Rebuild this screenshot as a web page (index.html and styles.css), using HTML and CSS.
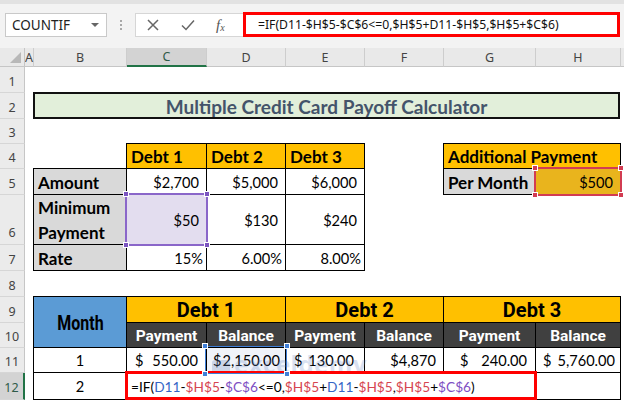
FILE: index.html
```html
<!DOCTYPE html>
<html lang="en">
<head>
<meta charset="utf-8">
<title>Multiple Credit Card Payoff Calculator</title>
<link rel="stylesheet" href="styles.css">
</head>
<body>
<div class="app">
  <div class="fbar">
    <div class="namebox"><span>COUNTIF</span><span class="caret"></span></div>
    <div class="dots"><i></i><i></i><i></i></div>
    <div class="fxbox">
      <svg class="ico" width="14" height="14" viewBox="0 0 14 14"><path d="M2 2 L12 12 M12 2 L2 12" stroke="#666" stroke-width="1.5" fill="none"/></svg>
      <svg class="ico" width="16" height="14" viewBox="0 0 16 14"><path d="M2 7.5 L6 11.5 L14 2.5" stroke="#666" stroke-width="1.5" fill="none"/></svg>
      <span class="fx">f<sub>x</sub></span>
    </div>
    <div class="finput">=IF(D11-$H$5-$C$6&lt;=0,$H$5+D11-$H$5,$H$5+$C$6)</div>
  </div>

  <div class="sheet">
    <div class="corner"><span class="tri"></span></div>
    <div class="colh cA">A</div>
    <div class="colh cB">B</div>
    <div class="colh cC selc">C</div>
    <div class="colh cD">D</div>
    <div class="colh cE">E</div>
    <div class="colh cF">F</div>
    <div class="colh cG">G</div>
    <div class="colh cH">H</div>
    <div class="colh cX"></div>

    <div class="rowh r1">1</div>
    <div class="rowh r2">2</div>
    <div class="rowh r3">3</div>
    <div class="rowh r4">4</div>
    <div class="rowh r5">5</div>
    <div class="rowh r6">6</div>
    <div class="rowh r7">7</div>
    <div class="rowh r8">8</div>
    <div class="rowh r9">9</div>
    <div class="rowh r10">10</div>
    <div class="rowh r11">11</div>
    <div class="rowh r12 selr">12</div>

    <div class="title r2 sB-H">Multiple Credit Card Payoff Calculator</div>

    <div class="cell yel r4 cC">Debt 1</div>
    <div class="cell yel r4 cD">Debt 2</div>
    <div class="cell yel r4 cE">Debt 3</div>
    <div class="cell yel r4 sG-H">Additional Payment</div>

    <div class="cell lbl r5 cB">Amount</div>
    <div class="cell num r5 cC">$2,700</div>
    <div class="cell num r5 cD">$5,000</div>
    <div class="cell num r5 cE">$6,000</div>
    <div class="cell lbl r5 cG">Per Month</div>
    <div class="cell num yel-sel r5 cH">$500
      <span class="sel sel-red"><i class="h tl"></i><i class="h tr"></i><i class="h bl"></i><i class="h br"></i></span>
    </div>

    <div class="cell lbl wrap r6 cB"><span>Minimum</span><span>Payment</span></div>
    <div class="cell num lav r6 cC">$50
      <span class="sel sel-purple"><i class="h tl"></i><i class="h tr"></i><i class="h bl"></i><i class="h br"></i></span>
    </div>
    <div class="cell num r6 cD">$130</div>
    <div class="cell num r6 cE">$240</div>

    <div class="cell lbl r7 cB">Rate</div>
    <div class="cell num pct r7 cC">15%</div>
    <div class="cell num pct r7 cD">6.00%</div>
    <div class="cell num pct r7 cE">8.00%</div>

    <div class="cell blue cond month center r9-10 cB"><span>Month</span></div>
    <div class="cell yel cond big center r9 sC-D"><span>Debt 1</span></div>
    <div class="cell yel cond big center r9 sE-F"><span>Debt 2</span></div>
    <div class="cell yel cond big center r9 sG-H"><span>Debt 3</span></div>

    <div class="cell dark cond center r10 cC"><span>Payment</span></div>
    <div class="cell dark cond center r10 cD"><span>Balance</span></div>
    <div class="cell dark cond center r10 cE"><span>Payment</span></div>
    <div class="cell dark cond center r10 cF"><span>Balance</span></div>
    <div class="cell dark cond center r10 cG"><span>Payment</span></div>
    <div class="cell dark cond center r10 cH"><span>Balance</span></div>

    <div class="cell center r11 cB">1</div>
    <div class="cell acc r11 cC"><span>$</span><span>550.00</span></div>
    <div class="cell acc tint r11 cD"><span>$</span><span>2,150.00</span>
      <span class="sel sel-blue"><i class="h tl"></i><i class="h tr"></i><i class="h bl"></i><i class="h br"></i></span>
    </div>
    <div class="cell acc r11 cE"><span>$</span><span>130.00</span></div>
    <div class="cell num r11 cF">$4,870</div>
    <div class="cell acc wide r11 cG"><span>$</span><span>240.00</span></div>
    <div class="cell acc last r11 cH"><span>$</span><span>5,760.00</span></div>

    <div class="cell center r12 cB">2</div>
    <div class="formula r12 sC-G">=IF(<b class="fb">D11</b>-<b class="fr">$H$5</b>-<b class="fp">$C$6</b>&lt;=0,<b class="fr">$H$5</b>+<b class="fb">D11</b>-<b class="fr">$H$5</b>,<b class="fr">$H$5</b>+<b class="fp">$C$6</b>)</div>
    <div class="cell r12 cH"></div>

    <div class="watermark"><span class="wm-logo"></span><span class="wm-text">exceldemy<small>EXCEL · DATA · BI</small></span></div>
  </div>
</div>
</body>
</html>
```

FILE: styles.css
```css
* { box-sizing: border-box; }

body {
  margin: 0;
  background: #fff;
  font-family: Lato, "Liberation Sans", sans-serif;
  color: #000;
}

.app {
  position: relative;
  width: 624px;
  height: 400px;
  overflow: hidden;
}

/* ---------- formula bar ---------- */
.fbar {
  height: 48px;
  display: flex;
  align-items: flex-start;
  padding: 13px 0 0 5px;
  background: linear-gradient(#e2e2e2 0 4px, #f3f3f3 4px);
}

.namebox {
  width: 102px;
  height: 24px;
  background: #fff;
  border: 1px solid #c9c9c9;
  display: flex;
  align-items: center;
  justify-content: space-between;
  padding: 0 7px 0 6px;
  font: 13.5px "Noto Sans", sans-serif;
  color: #222;
}

.caret {
  width: 0;
  height: 0;
  border-left: 4px solid transparent;
  border-right: 4px solid transparent;
  border-top: 4px solid #666;
}

.dots {
  width: 28px;
  height: 24px;
  display: flex;
  flex-direction: column;
  align-items: center;
  justify-content: center;
  gap: 2px;
}

.dots i {
  width: 2px;
  height: 2px;
  background: #a8a8a8;
}

.fxbox {
  width: 108px;
  height: 24px;
  background: #fff;
  border: 1px solid #d6d6d6;
  border-right: none;
  display: flex;
  align-items: center;
  gap: 20px;
  padding-left: 10px;
}

.fx {
  font: italic 15px "Liberation Serif", serif;
  color: #555;
}

.fx sub {
  font-size: 10px;
  vertical-align: -1px;
}

.finput {
  width: 377px;
  height: 25px;
  margin-top: -1px;
  border: 3px solid #ff0000;
  background: #fff;
  padding-left: 12px;
  font: 12.2px "Noto Sans", sans-serif;
  line-height: 19px;
  white-space: nowrap;
  color: #111;
}

/* ---------- sheet grid ---------- */
.sheet {
  position: relative;
  display: grid;
  grid-template-columns: 25px 9px 93px 80px 79px 79px 79px 92px 85px 3px;
  grid-template-rows: 19px 26px 26px 25px 25px 26px 50px 26px 26px 26px 25px 25px 27px;
}

.corner {
  grid-column: 1;
  grid-row: 1;
  background: #e9e9e9;
  border-right: 1px solid #c6c6c6;
  border-bottom: 1px solid #c6c6c6;
  position: relative;
}

.tri {
  position: absolute;
  right: 3px;
  bottom: 3px;
  width: 0;
  height: 0;
  border-left: 11px solid transparent;
  border-bottom: 11px solid #b8b8b8;
}

.colh {
  grid-row: 1;
  background: #e9e9e9;
  border-right: 1px solid #cdcdcd;
  border-bottom: 1px solid #c6c6c6;
  display: flex;
  align-items: center;
  justify-content: center;
  font: 12.5px "Noto Sans", sans-serif;
  color: #444;
}

.colh.cX { border-right: none; }

.colh.selc {
  background: #d3d3d3;
  border-bottom: 2px solid #217346;
  color: #2e5a48;
}

.rowh {
  grid-column: 1;
  background: #ebebeb;
  border-right: 1px solid #c6c6c6;
  border-bottom: 1px solid #d6d6d6;
  display: flex;
  align-items: center;
  justify-content: center;
  padding-top: 3px;
  font: 12.5px "Noto Sans", sans-serif;
  color: #444;
}

.rowh.r6 { align-items: flex-end; padding-bottom: 3px; }

.rowh.selr {
  background: #d3d3d3;
  border-right: 2px solid #217346;
  color: #2e5a48;
}

/* row placement */
.r1 { grid-row: 2; }
.r2 { grid-row: 3; }
.r3 { grid-row: 4; }
.r4 { grid-row: 5; }
.r5 { grid-row: 6; }
.r6 { grid-row: 7; }
.r7 { grid-row: 8; }
.r8 { grid-row: 9; }
.r9 { grid-row: 10; }
.r10 { grid-row: 11; }
.r11 { grid-row: 12; }
.r12 { grid-row: 13; }
.r9-10 { grid-row: 10 / 12; }

/* column placement */
.cA { grid-column: 2; }
.cB { grid-column: 3; }
.cC { grid-column: 4; }
.cD { grid-column: 5; }
.cE { grid-column: 6; }
.cF { grid-column: 7; }
.cG { grid-column: 8; }
.cH { grid-column: 9; }
.cX { grid-column: 10; }
.sB-H { grid-column: 3 / 10; }
.sC-D { grid-column: 4 / 6; }
.sE-F { grid-column: 6 / 8; }
.sG-H { grid-column: 8 / 10; }
.sC-G { grid-column: 4 / 9; }

/* ---------- cells ---------- */
.title {
  margin: -1px 1px 0 -1px;
  border: 2px solid #111;
  background: #e2efda;
  color: #44546a;
  font-weight: 700;
  font-size: 19px;
  display: flex;
  align-items: center;
  justify-content: center;
  padding-top: 1px;
}

.cell {
  position: relative;
  margin: -1px 0 0 -1px;
  border: 1px solid #000;
  display: flex;
  align-items: center;
  padding: 1px 4px 0;
  font-size: 14.6px;
  white-space: nowrap;
}

.yel { background: #ffc000; font-weight: 700; font-size: 17px; }
.lbl { background: #d9d9d9; font-weight: 700; font-size: 17px; }
.num { justify-content: flex-end; padding-right: 7px; }
.pct { padding-right: 3px; }
.center { justify-content: center; }
.lav { background: #e3ddef; }
.tint { background: #f0f3f9; }
.yel-sel { background: #e9b41d; }

.wrap {
  flex-direction: column;
  align-items: flex-start;
  justify-content: space-between;
  padding: 2px 4px 1px;
}

.acc {
  justify-content: space-between;
  padding: 1px 8px 0 8px;
}

.acc.tint { padding-left: 6px; justify-content: flex-start; gap: 1px; }
.acc.wide { padding-left: 16px; }
.cE.acc { padding-right: 10px; }
.acc.last { padding: 1px 5px 0 7px; }

.blue { background: #5b9bd5; }
.dark { background: #404040; color: #fff; }

.cond {
  font-family: Roboto, "DejaVu Sans", sans-serif;
  font-weight: 700;
  font-size: 20px;
}

.cond span { display: inline-block; }

.cond.month { font-size: 21px; }
.cond.month span { transform: scaleX(0.76); }
.cond.big { font-size: 20px; }
.dark.cond { font-size: 15.5px; }

/* formula being edited */
.formula {
  position: relative;
  margin: -2px -1px 0 -2px;
  border: 3px solid #ff0000;
  background: #fff;
  display: flex;
  align-items: center;
  padding: 1px 0 0 3px;
  font-size: 13.7px;
  white-space: nowrap;
  z-index: 2;
}

.formula b { font-weight: 400; }
.fb { color: #3565c6; }
.fr { color: #d64550; }
.fp { color: #7e4fc3; }

/* selection outlines (drawn over the cells) */
.sel {
  position: absolute;
  inset: -2px;
  border: 2px solid;
  pointer-events: none;
  z-index: 3;
}

.sel-purple { border-color: #8a66c9; }
.sel-red { border-color: #d23c52; }
.sel-blue { border-color: #3f7fd8; border-width: 1.5px; }

.h {
  position: absolute;
  width: 6px;
  height: 6px;
  border: 1px solid #fff;
}

.sel-purple .h { background: #7b55c0; }
.sel-red .h { background: #d23c52; }
.sel-blue .h { background: #3f7fd8; }

.h.tl { left: -4px; top: -4px; }
.h.tr { right: -4px; top: -4px; }
.h.bl { left: -4px; bottom: -4px; }
.h.br { right: -4px; bottom: -4px; }

/* faint watermark */
.watermark {
  position: absolute;
  left: 212px;
  top: 304px;
  display: flex;
  align-items: center;
  gap: 4px;
  opacity: 0.25;
  pointer-events: none;
  z-index: 1;
}

.wm-logo {
  width: 18px;
  height: 18px;
  border-radius: 3px;
  background: #5f7fb8;
}

.wm-text {
  display: flex;
  flex-direction: column;
  align-items: flex-end;
  font: 700 24px "Open Sans", sans-serif;
  color: #6a8cc8;
  line-height: 24px;
  letter-spacing: 0.5px;
}

.wm-text small {
  font: 600 7px "Open Sans", sans-serif;
  letter-spacing: 1px;
  color: #6d7a90;
  line-height: 9px;
  margin-right: 30px;
}
```
